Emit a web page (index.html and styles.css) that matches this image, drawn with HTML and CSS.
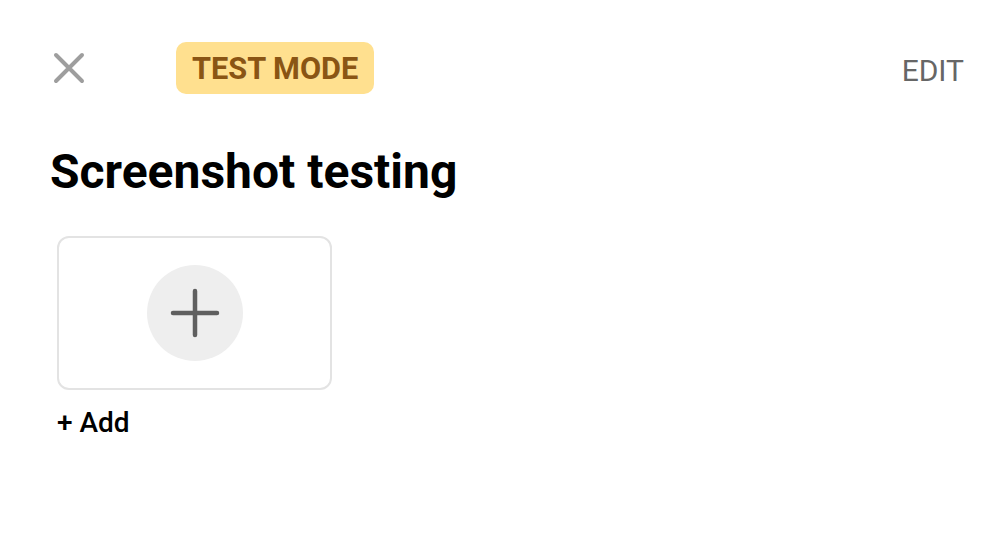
FILE: index.html
```html
<!DOCTYPE html>
<html>
<head>
<meta charset="utf-8">
<link rel="stylesheet" href="styles.css">
</head>
<body>
<div class="page">
  <header class="topbar">
    <svg class="close" width="36" height="36" viewBox="0 0 36 36">
      <path d="M5 5 L31 31 M31 5 L5 31" stroke="#9e9e9e" stroke-width="4" stroke-linecap="round" fill="none"/>
    </svg>
    <div class="badge">TEST MODE</div>
    <div class="spacer"></div>
    <div class="edit">EDIT</div>
  </header>
  <h1 class="title">Screenshot testing</h1>
  <div class="item">
    <div class="card">
      <div class="circle">
        <svg width="52" height="52" viewBox="0 0 52 52">
          <path d="M26 4 L26 48 M4 26 L48 26" stroke="#5f5f5f" stroke-width="4.5" stroke-linecap="round" fill="none"/>
        </svg>
      </div>
    </div>
    <div class="add">+ Add</div>
  </div>
</div>
</body>
</html>
```
FILE: styles.css
```css
html, body {
  margin: 0;
  padding: 0;
  background: #ffffff;
}
.page {
  font-family: Roboto, "Noto Sans", sans-serif;
  color: #000;
}
.topbar {
  display: flex;
  align-items: center;
  height: 136px;
  padding: 0 36px 0 51px;
}
.close {
  display: block;
  flex: none;
}
.badge {
  margin-left: 89px;
  height: 52px;
  padding: 0 16px;
  display: flex;
  align-items: center;
  background: #ffe08f;
  border-radius: 10px;
  color: #8a5514;
  font-weight: 700;
  font-size: 30.7px;
}
.spacer {
  flex: 1;
}
.edit {
  font-size: 30px;
  color: #666666;
  margin-top: 4px;
}
.title {
  margin: 8px 0 0 50px;
  font-size: 48px;
  line-height: 56px;
  font-weight: 700;
}
.item {
  margin: 36px 0 0 57px;
  width: 275px;
}
.card {
  box-sizing: border-box;
  width: 275px;
  height: 154px;
  border: 2px solid #e3e3e3;
  border-radius: 12px;
  display: flex;
  align-items: center;
  justify-content: center;
}
.circle {
  width: 96px;
  height: 96px;
  border-radius: 50%;
  background: #eeeeee;
  display: flex;
  align-items: center;
  justify-content: center;
}
.circle svg {
  display: block;
}
.add {
  margin-top: 16px;
  font-size: 28px;
  line-height: 34px;
  font-weight: 500;
}
```
